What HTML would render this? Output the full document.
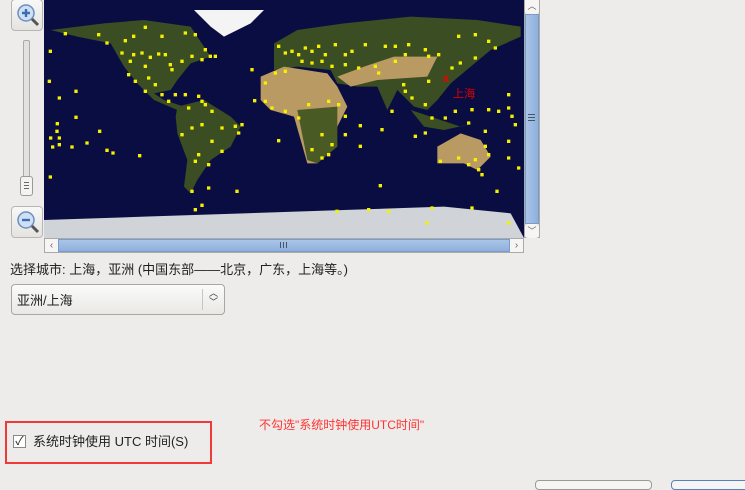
<!DOCTYPE html>
<html><head><meta charset="utf-8"><style>
*{margin:0;padding:0;box-sizing:border-box}
body{width:745px;height:484px;background:#edecea;position:relative;overflow:hidden;font-family:"Liberation Sans","Noto Sans CJK SC",sans-serif;font-size:13px;color:#222}
.a{position:absolute}
.zb{position:absolute;left:11px;width:32px;height:32px;border:1px solid #b8b6b2;border-radius:4px;background:linear-gradient(#f8f8f7,#e4e3e0)}
</style></head><body>
<div class="zb" style="top:-1px"><svg width="32" height="32" viewBox="0 0 32 32"><circle cx="14" cy="13" r="8" fill="#cfe0f5" stroke="#6b8fbf" stroke-width="1.5"/><path d="M14 9v8M10 13h8" stroke="#3d6fb0" stroke-width="2.4"/><path d="M20 19l6 6" stroke="#555" stroke-width="3"/></svg></div>
<div class="a" style="left:23px;top:40px;width:7px;height:156px;border:1px solid #aaa;background:#e2e1de;border-radius:2px"></div>
<div class="a" style="left:20px;top:176px;width:13px;height:20px;border:1px solid #999;border-radius:3px;background:#f4f3f1"><div style="margin:5px 3px 0;height:7px;border-top:1px solid #666;border-bottom:1px solid #666"><div style="margin-top:2px;border-top:1px solid #666"></div></div></div>
<div class="zb" style="top:206px"><svg width="32" height="32" viewBox="0 0 32 32"><circle cx="14" cy="13" r="8" fill="#cfe0f5" stroke="#6b8fbf" stroke-width="1.5"/><path d="M10 13h8" stroke="#3d6fb0" stroke-width="2.4"/><path d="M20 19l6 6" stroke="#555" stroke-width="3"/></svg></div>

<svg class="a" style="left:44px;top:0" width="480" height="238" viewBox="0 0 1440 714" preserveAspectRatio="none">
<rect width="1440" height="714" fill="#0a0d42"/>
<g fill="#3b4d22">
<polygon points="20,90 180,70 300,60 440,80 480,140 500,170 440,190 400,240 380,270 330,280 360,300 420,320 400,330 330,300 280,250 240,200 200,130 100,110"/>
<polygon points="400,320 480,300 560,350 590,380 560,440 500,480 460,540 440,580 420,560 430,480 400,400 395,350"/>
<polygon points="690,130 760,90 900,70 1100,50 1300,60 1430,80 1430,110 1340,150 1280,200 1220,250 1180,300 1150,330 1110,320 1060,270 1030,330 1000,260 940,260 880,250 860,210 760,200 690,210 690,160"/>
<polygon points="1100,330 1160,350 1250,380 1290,370 1200,390 1140,380"/>
</g>
<g fill="#b89a62">
<polygon points="650,230 720,200 850,220 880,260 910,320 880,380 870,440 820,490 790,490 770,420 750,350 680,330 650,300"/>
<polygon points="1180,440 1250,400 1310,420 1340,470 1300,510 1260,490 1180,490"/>
<polygon points="880,230 960,200 1050,170 1180,170 1150,230 1000,240 920,260"/>
</g>
<polygon points="760,330 880,320 880,440 820,490 790,480" fill="#4a5a25"/>
<polygon points="450,30 660,30 620,70 540,110 500,80" fill="#f4f4f4"/>
<polygon points="0,660 300,650 600,640 900,630 1200,620 1400,640 1440,714 0,714" fill="#d0d4d8"/>
<g fill="#f5f000" transform="translate(-1,-1)">
<path d="M60 97h10v10h-10zM160 100h10v10h-10zM185 125h10v10h-10zM240 118h10v10h-10zM265 105h10v10h-10zM300 78h10v10h-10zM350 105h10v10h-10zM420 95h10v10h-10zM450 100h10v10h-10zM230 155h10v10h-10zM265 160h10v10h-10zM290 155h10v10h-10zM315 168h10v10h-10zM340 158h10v10h-10zM360 160h10v10h-10zM375 190h10v10h-10zM380 205h10v10h-10zM410 180h10v10h-10zM440 165h10v10h-10zM480 145h10v10h-10zM495 165h10v10h-10zM510 165h10v10h-10zM470 175h10v10h-10zM255 180h10v10h-10zM300 195h10v10h-10zM250 220h10v10h-10zM270 240h10v10h-10zM310 230h10v10h-10zM330 250h10v10h-10zM300 270h10v10h-10zM350 280h10v10h-10zM370 300h10v10h-10zM390 280h10v10h-10zM420 280h10v10h-10zM460 285h10v10h-10zM470 300h10v10h-10zM480 310h10v10h-10z"/>
<path d="M430 320h10v10h-10zM500 330h10v10h-10zM440 380h10v10h-10zM470 370h10v10h-10zM530 380h10v10h-10zM570 375h10v10h-10zM590 370h10v10h-10zM580 395h10v10h-10zM410 400h10v10h-10zM500 420h10v10h-10zM460 460h10v10h-10zM450 480h10v10h-10zM490 490h10v10h-10zM530 450h10v10h-10zM440 570h10v10h-10zM490 560h10v10h-10z"/>
<path d="M660 245h10v10h-10zM690 215h10v10h-10zM720 210h10v10h-10zM660 300h10v10h-10zM680 320h10v10h-10zM720 330h10v10h-10zM760 350h10v10h-10zM790 310h10v10h-10zM850 300h10v10h-10zM880 310h10v10h-10zM900 345h10v10h-10zM830 400h10v10h-10zM860 430h10v10h-10zM800 445h10v10h-10zM830 470h10v10h-10zM850 460h10v10h-10zM900 400h10v10h-10zM945 435h10v10h-10z"/>
<path d="M700 135h10v10h-10zM720 155h10v10h-10zM740 150h10v10h-10zM760 160h10v10h-10zM780 140h10v10h-10zM800 150h10v10h-10zM820 135h10v10h-10zM840 160h10v10h-10zM770 180h10v10h-10zM800 185h10v10h-10zM830 180h10v10h-10zM860 195h10v10h-10zM870 130h10v10h-10zM900 160h10v10h-10zM920 150h10v10h-10zM960 130h10v10h-10zM1020 135h10v10h-10zM1050 135h10v10h-10zM1090 130h10v10h-10zM1140 145h10v10h-10z"/>
<path d="M900 190h10v10h-10zM940 200h10v10h-10zM990 195h10v10h-10zM1000 215h10v10h-10zM1050 180h10v10h-10zM1080 160h10v10h-10zM1150 165h10v10h-10zM1180 160h10v10h-10zM1240 105h10v10h-10zM1290 100h10v10h-10zM1330 120h10v10h-10zM1350 140h10v10h-10zM1290 170h10v10h-10zM1245 185h10v10h-10zM1220 200h10v10h-10zM1150 240h10v10h-10zM1075 250h10v10h-10zM1080 270h10v10h-10zM1040 330h10v10h-10zM1010 385h10v10h-10zM1100 290h10v10h-10zM1140 310h10v10h-10zM1160 350h10v10h-10zM1200 350h10v10h-10zM1230 330h10v10h-10zM1270 365h10v10h-10zM1110 405h10v10h-10zM1140 395h10v10h-10z"/>
<path d="M1280 325h10v10h-10zM1330 325h10v10h-10zM1360 330h10v10h-10zM1390 320h10v10h-10zM1400 345h10v10h-10zM1410 370h10v10h-10zM1390 280h10v10h-10zM1320 390h10v10h-10zM1390 420h10v10h-10zM1390 470h10v10h-10zM1420 500h10v10h-10zM1355 570h10v10h-10zM1185 480h10v10h-10zM1240 470h10v10h-10zM1270 490h10v10h-10zM1290 475h10v10h-10zM1310 520h10v10h-10zM1320 435h10v10h-10zM1330 460h10v10h-10zM1300 505h10v10h-10z"/>
<path d="M15 150h10v10h-10zM12 240h10v10h-10zM92 270h10v10h-10zM42 290h10v10h-10zM92 348h10v10h-10zM36 367h10v10h-10zM35 390h10v10h-10zM16 410h10v10h-10zM42 410h10v10h-10zM22 437h10v10h-10zM42 430h10v10h-10zM80 437h10v10h-10zM125 425h10v10h-10zM163 390h10v10h-10zM185 447h10v10h-10zM203 455h10v10h-10zM283 463h10v10h-10zM15 527h10v10h-10zM620 205h10v10h-10zM628 298h10v10h-10zM700 418h10v10h-10zM945 373h10v10h-10zM1005 553h10v10h-10zM575 570h10v10h-10zM1160 620h10v10h-10zM1145 665h10v10h-10zM875 630h10v10h-10zM970 625h10v10h-10zM1030 630h10v10h-10zM1280 620h10v10h-10zM1390 665h10v10h-10zM470 612h10v10h-10zM450 625h10v10h-10z"/>
</g>
<text x="1196" y="246" fill="#e00" font-size="36" font-weight="bold" font-family="Liberation Sans,sans-serif">x</text>
<text x="1226" y="292" fill="#d00" font-size="34" font-family="Liberation Sans,Noto Sans CJK SC,sans-serif">上海</text>
</svg>

<div class="a" style="left:524px;top:0;width:16px;height:238px;background:#dcdad6;border:1px solid #aaa"></div>
<div class="a" style="left:525px;top:14px;width:14px;height:210px;background:linear-gradient(90deg,#a9c4e8,#8fb0dd);border:1px solid #7a9cc8"></div>
<div class="a" style="left:525px;top:0;width:14px;height:14px;background:#f6f5f3;color:#666;font-size:9px;text-align:center;line-height:12px;border-radius:0 0 3px 3px">︿</div>
<div class="a" style="left:525px;top:224px;width:14px;height:14px;background:#f6f5f3;color:#666;font-size:9px;text-align:center;line-height:14px;border-radius:3px">﹀</div>
<div class="a" style="left:528px;top:114px;width:7px;height:7px;border-top:1px solid #456;border-bottom:1px solid #456"><div style="margin-top:2px;border-top:1px solid #456"></div></div>

<div class="a" style="left:44px;top:238px;width:480px;height:15px;background:#dcdad6;border:1px solid #aaa"></div>
<div class="a" style="left:58px;top:239px;width:452px;height:13px;background:linear-gradient(#a9c4e8,#8fb0dd);border:1px solid #7a9cc8"></div>
<div class="a" style="left:45px;top:239px;width:13px;height:13px;background:#f6f5f3;color:#666;font-size:10px;text-align:center;line-height:13px">‹</div>
<div class="a" style="left:510px;top:239px;width:13px;height:13px;background:#f6f5f3;color:#666;font-size:10px;text-align:center;line-height:13px">›</div>
<div class="a" style="left:280px;top:242px;width:7px;height:6px;border-left:1px solid #456;border-right:1px solid #456"><div style="margin-left:2px;height:6px;border-left:1px solid #456"></div></div>

<div class="a" style="left:10px;top:259px;white-space:nowrap">选择城市: 上海，亚洲 (中国东部——北京，广东，上海等。)</div>
<div class="a" style="left:11px;top:284px;width:214px;height:31px;border:1px solid #a9a7a3;border-radius:4px;background:linear-gradient(#fbfbfa,#e9e8e5)">
<div class="a" style="left:5px;top:5px">亚洲/上海</div>
<div class="a" style="left:190px;top:4px;height:21px;border-left:1px solid #c8c6c2"></div>
<div class="a" style="left:197px;top:4px;font-size:9px;line-height:9px;color:#333">︿<br>﹀</div>
</div>

<div class="a" style="left:259px;top:416px;color:#f33;font-size:12px;white-space:nowrap">不勾选"系统时钟使用UTC时间"</div>
<div class="a" style="left:5px;top:421px;width:207px;height:43px;border:2px solid #f03a3a"></div>
<div class="a" style="left:13px;top:435px;width:13px;height:13px;border:1px solid #888;background:#fff;font-size:12px;line-height:11px;text-align:center">✓</div>
<div class="a" style="left:33px;top:431px;white-space:nowrap">系统时钟使用 UTC 时间(S)</div>

<div class="a" style="left:535px;top:480px;width:117px;height:10px;border:1px solid #999;border-radius:4px;background:#f5f5f4"></div>
<div class="a" style="left:671px;top:480px;width:80px;height:10px;border:1px solid #5a7fc0;border-radius:4px;background:#f5f5f4"></div>
</body></html>
